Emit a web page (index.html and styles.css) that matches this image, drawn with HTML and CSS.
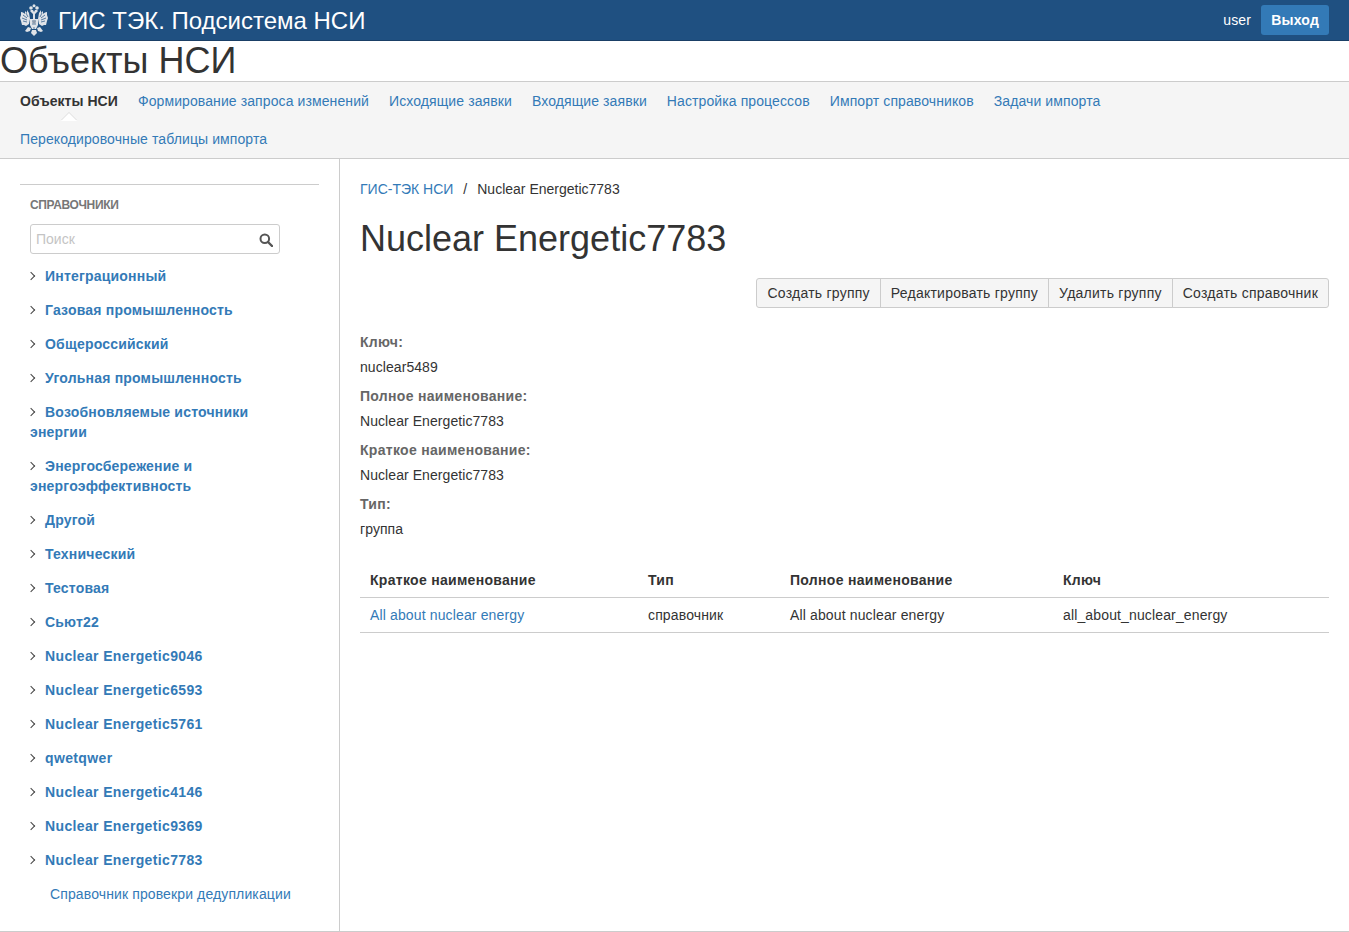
FILE: index.html
```html
<!DOCTYPE html>
<html lang="ru">
<head>
  <meta charset="UTF-8">
  <title>Объекты НСИ</title>
  <link rel="stylesheet" href="styles.css">
</head>
<body>
  <header class="top-bar">
    <div class="brand">
      <svg class="brand-logo" width="28" height="32" viewBox="0 0 28 32">
        <g fill="#dfe3e8">
          <path d="M1 8c2 0 3 1 4 2V7l2 2V6l2 3 1 6-1 5-3 2-2-1-2 0-1-4-1-3 1-3z"/>
          <path d="M27 8c-2 0-3 1-4 2V7l-2 2V6l-2 3-1 6 1 5 3 2 2-1 2 0 1-4 1-3-1-3z"/>
          <path d="M10 7l3 3v5h2v-5l3-3-1-1h-2l-1 2-1-2h-2z"/>
          <path d="M10 15h8v6l-2 4h-4l-2-4z"/>
          <path d="M8 23l3 1-1 3-3 1-2-1zM20 23l-3 1 1 3 3 1 2-1z"/>
          <path d="M12 26h4l1 3-3 3-3-3z"/>
          <circle cx="11" cy="4" r="1.8"/>
          <circle cx="17" cy="4" r="1.8"/>
          <circle cx="14" cy="1.8" r="1.5"/>
        </g>
        <g fill="none" stroke="#1f5081" stroke-width="0.7">
          <path d="M3 11l4 3M2 14l5 2M3 17l4 1M6 9l2 4"/>
          <path d="M25 11l-4 3M26 14l-5 2M25 17l-4 1M22 9l-2 4"/>
          <path d="M12 17h4M12 20h4M14 23v3"/>
        </g>
        <circle cx="14" cy="18" r="1.8" fill="#8d9aab"/>
      </svg>
      <span class="brand-name">ГИС ТЭК. Подсистема НСИ</span>
    </div>
    <div class="user-box">
      <span class="user-name">user</span>
      <a class="logout-button">Выход</a>
    </div>
  </header>

  <h1 class="page-title">Объекты НСИ</h1>

  <nav class="tabs">
    <a class="tab tab-active">Объекты НСИ</a>
    <a class="tab">Формирование запроса изменений</a>
    <a class="tab">Исходящие заявки</a>
    <a class="tab">Входящие заявки</a>
    <a class="tab">Настройка процессов</a>
    <a class="tab">Импорт справочников</a>
    <a class="tab">Задачи импорта</a>
    <a class="tab">Перекодировочные таблицы импорта</a>
  </nav>

  <div class="layout">
    <aside class="sidebar">
      <div class="sidebar-head">Справочники</div>
      <div class="search">
        <input class="search-input" type="text" placeholder="Поиск">
        <svg class="search-icon" width="14" height="14" viewBox="0 0 14 14">
          <circle cx="5.8" cy="5.8" r="4.3" fill="none" stroke="#555" stroke-width="2"/>
          <path d="M9 9l4 4" stroke="#555" stroke-width="2.4" stroke-linecap="round"/>
        </svg>
      </div>
      <ul class="tree">
        <li><span class="arrow"></span><a>Интеграционный</a></li>
        <li><span class="arrow"></span><a>Газовая промышленность</a></li>
        <li><span class="arrow"></span><a>Общероссийский</a></li>
        <li><span class="arrow"></span><a>Угольная промышленность</a></li>
        <li><span class="arrow"></span><a>Возобновляемые источники энергии</a></li>
        <li><span class="arrow"></span><a>Энергосбережение и энергоэффективность</a></li>
        <li><span class="arrow"></span><a>Другой</a></li>
        <li><span class="arrow"></span><a>Технический</a></li>
        <li><span class="arrow"></span><a>Тестовая</a></li>
        <li><span class="arrow"></span><a>Сьют22</a></li>
        <li class="tree-latin"><span class="arrow"></span><a>Nuclear Energetic9046</a></li>
        <li class="tree-latin"><span class="arrow"></span><a>Nuclear Energetic6593</a></li>
        <li class="tree-latin"><span class="arrow"></span><a>Nuclear Energetic5761</a></li>
        <li class="tree-latin"><span class="arrow"></span><a>qwetqwer</a></li>
        <li class="tree-latin"><span class="arrow"></span><a>Nuclear Energetic4146</a></li>
        <li class="tree-latin"><span class="arrow"></span><a>Nuclear Energetic9369</a></li>
        <li class="tree-latin"><span class="arrow"></span><a>Nuclear Energetic7783</a></li>
        <li class="tree-leaf"><a>Справочник провекри дедупликации</a></li>
      </ul>
    </aside>

    <main class="content">
      <div class="breadcrumb">
        <a>ГИС-ТЭК НСИ</a>
        <span class="breadcrumb-sep">/</span>
        <span>Nuclear Energetic7783</span>
      </div>
      <h2 class="content-title">Nuclear Energetic7783</h2>
      <div class="actions">
        <div class="button-group">
          <a class="button">Создать группу</a>
          <a class="button">Редактировать группу</a>
          <a class="button">Удалить группу</a>
          <a class="button">Создать справочник</a>
        </div>
      </div>
      <dl class="details">
        <dt>Ключ:</dt>
        <dd>nuclear5489</dd>
        <dt>Полное наименование:</dt>
        <dd>Nuclear Energetic7783</dd>
        <dt>Краткое наименование:</dt>
        <dd>Nuclear Energetic7783</dd>
        <dt>Тип:</dt>
        <dd>группа</dd>
      </dl>
      <table class="items">
        <thead>
          <tr>
            <th class="col-short">Краткое наименование</th>
            <th class="col-type">Тип</th>
            <th class="col-full">Полное наименование</th>
            <th>Ключ</th>
          </tr>
        </thead>
        <tbody>
          <tr>
            <td><a>All about nuclear energy</a></td>
            <td>справочник</td>
            <td>All about nuclear energy</td>
            <td>all_about_nuclear_energy</td>
          </tr>
        </tbody>
      </table>
    </main>
  </div>
</body>
</html>
```

FILE: styles.css
```css
* {
  box-sizing: border-box;
}

body {
  margin: 0;
  background-color: #ffffff;
  color: #333333;
  font-family: "Liberation Sans", Arial, sans-serif;
  font-size: 14px;
  line-height: 20px;
}

a {
  color: #337ab7;
}

.top-bar {
  display: flex;
  justify-content: space-between;
  align-items: center;
  height: 41px;
  padding: 0 20px;
  background-color: #1f5081;
  border-bottom: 1px solid #1a3f66;
}

.brand {
  display: flex;
  align-items: center;
  gap: 10px;
}

.brand-name {
  padding-top: 2px;
  color: #ffffff;
  font-size: 24px;
}

.user-box {
  display: flex;
  align-items: center;
  gap: 10px;
}

.user-name {
  color: #ffffff;
  letter-spacing: 0.2px;
}

.logout-button {
  padding: 5px 10px;
  background-color: #337ab7;
  border-radius: 3px;
  color: #ffffff;
  font-weight: bold;
  letter-spacing: 0.2px;
}

.page-title {
  margin: 0;
  height: 40px;
  color: #333333;
  font-size: 36px;
  font-weight: normal;
  line-height: 40px;
}

.tabs {
  display: flex;
  flex-wrap: wrap;
  height: 78px;
  padding: 0 10px;
  background-color: #f5f5f5;
  border-top: 1px solid #cccccc;
  border-bottom: 1px solid #cccccc;
  letter-spacing: 0.1px;
}

.tab {
  position: relative;
  padding: 9px 10px;
  height: 38px;
}

.tab-active {
  color: #333333;
  font-weight: bold;
  letter-spacing: 0.05px;
}

.tab-active::before,
.tab-active::after {
  content: "";
  position: absolute;
  left: 50%;
  margin-left: -8px;
  border-left: 8px solid transparent;
  border-right: 8px solid transparent;
}

.tab-active::before {
  bottom: 0;
  border-bottom: 8px solid #dddddd;
}

.tab-active::after {
  bottom: -1px;
  border-bottom: 8px solid #ffffff;
}

.layout {
  display: flex;
  height: 773px;
  border-bottom: 1px solid #cccccc;
}

.sidebar {
  width: 340px;
  flex-shrink: 0;
  padding-top: 25px;
  border-right: 1px solid #cccccc;
}

.sidebar-head {
  margin: 0 20px;
  padding: 10px 10px 0;
  border-top: 1px solid #cccccc;
  color: #777777;
  font-size: 12px;
  font-weight: bold;
  text-transform: uppercase;
  letter-spacing: -0.35px;
}

.search {
  position: relative;
  width: 250px;
  margin: 9px 0 0 30px;
}

.search-input {
  display: block;
  width: 100%;
  height: 30px;
  padding: 0 5px;
  border: 1px solid #cccccc;
  border-radius: 3px;
  color: #333333;
  font-family: inherit;
  font-size: 14px;
}

.search-input::placeholder {
  color: #c4c4c4;
}

.search-icon {
  position: absolute;
  top: 9px;
  right: 7px;
}

.tree {
  width: 240px;
  margin: 5px 0 0 30px;
  padding: 0;
  list-style: none;
  font-weight: bold;
  letter-spacing: 0.2px;
}

.tree li {
  padding: 7px 0;
}

.tree .tree-latin {
  letter-spacing: 0.36px;
}

.arrow {
  display: inline-block;
  width: 6px;
  height: 6px;
  margin: 0 11px 2px -2px;
  border-top: 1.5px solid #444444;
  border-right: 1.5px solid #444444;
  transform: rotate(45deg);
}

.tree .tree-leaf {
  padding-left: 20px;
  width: 300px;
  font-weight: normal;
  letter-spacing: 0.12px;
}

.content {
  flex: 1;
  padding: 20px;
}

.breadcrumb {
  display: flex;
  gap: 10px;
}

.content-title {
  margin: 20px 0 0;
  color: #333333;
  font-size: 36px;
  font-weight: normal;
  line-height: 40px;
}

.actions {
  display: flex;
  justify-content: flex-end;
  margin-top: 19px;
}

.button-group {
  display: flex;
}

.button {
  height: 30px;
  padding: 4px 10px;
  margin-left: -1px;
  background-color: #f5f5f5;
  border: 1px solid #cccccc;
  color: #333333;
  letter-spacing: 0.24px;
}

.button:first-child {
  border-radius: 3px 0 0 3px;
}

.button:last-child {
  border-radius: 0 3px 3px 0;
}

.details {
  margin: 24px 0 0;
}

.details dt {
  color: #666666;
  font-weight: bold;
  letter-spacing: 0.3px;
}

.details dd {
  margin: 5px 0 9px;
  letter-spacing: 0.07px;
}

.items {
  width: 100%;
  margin-top: 24px;
  border-collapse: collapse;
}

.items th {
  padding: 7px 10px 7px;
  border-bottom: 1px solid #cccccc;
  text-align: left;
  letter-spacing: 0.3px;
}

.items td {
  padding: 7px 10px;
  border-bottom: 1px solid #cccccc;
  letter-spacing: 0.14px;
}

.col-short {
  width: 278px;
}

.col-type {
  width: 142px;
}

.col-full {
  width: 273px;
}
```
